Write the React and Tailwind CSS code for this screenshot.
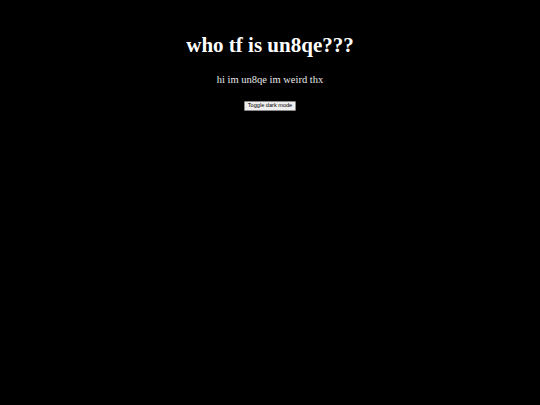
export default function App() {
  return (
    <div className="min-h-screen bg-black text-white flex flex-col items-center text-center font-['Liberation_Serif',serif]">
      <h1 className="mt-[33px] text-[21px] leading-[24px] font-bold">who tf is un8qe???</h1>
      <p className="mt-[17px] text-[10.5px] leading-[12px] text-[#e8e8e8]">hi im un8qe im weird thx</p>
      <button className="mt-[15px] h-[10px] px-[3px] bg-[#efefef] border border-[#8a8a8a] rounded-[1px] text-black text-[5.6px] leading-none font-['Liberation_Sans',sans-serif] flex items-center">
        Toggle dark mode
      </button>
    </div>
  );
}
